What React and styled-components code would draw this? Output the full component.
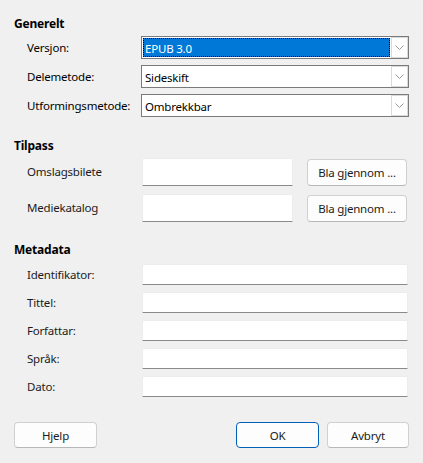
import React from 'react';
import styled, { createGlobalStyle } from 'styled-components';

const GlobalStyle = createGlobalStyle`
html, body {
	margin: 0;
	padding: 0;
	background: #f0f0f0;
}
body {
	font-family: "Noto Sans", "Open Sans", sans-serif;
	font-size: 11.5px;
	letter-spacing: -0.2px;
	color: #000;
}
`;

const Dialog = styled.div`
width: 423px;
height: 463px;
box-sizing: border-box;
padding: 16px 14px 0 14px;
display: flex;
flex-direction: column;
`;

const Section = styled.div`
display: flex;
flex-direction: column;
margin-top: ${(p) => p.top || 0}px;
`;

const Heading = styled.div`
font-weight: bold;
font-size: 12px;
line-height: 16px;
height: 16px;
margin-bottom: ${(p) => p.gap || 4}px;
`;

const Rows = styled.div`
display: flex;
flex-direction: column;
gap: ${(p) => p.gap}px;
padding-left: 13px;
`;

const Row = styled.div`
display: grid;
grid-template-columns: ${(p) => p.cols};
align-items: center;
height: ${(p) => p.h}px;
`;

const Label = styled.div`
line-height: 16px;
white-space: nowrap;
color: ${(p) => p.color || '#000'};
`;

const Combo = styled.div`
height: 23px;
box-sizing: border-box;
border: 1px solid #7a7a7a;
background: #fff;
display: flex;
`;

const ComboText = styled.div`
flex: 1;
margin: 1px;
padding-left: 1px;
line-height: 19px;
box-sizing: border-box;
border: 1px dotted ${(p) => (p.focused ? '#000' : 'transparent')};
background: ${(p) => (p.focused ? '#0078d7' : '#fff')};
color: ${(p) => (p.focused ? '#fff' : '#000')};
`;

const ComboButton = styled.div`
width: 17px;
box-sizing: border-box;
border: 1px solid #dadada;
display: flex;
align-items: center;
justify-content: center;
`;

const TextField = styled.div`
height: ${(p) => p.h}px;
box-sizing: border-box;
background: #fff;
border: 1px solid #ececec;
border-bottom: 1px solid #8a8a8a;
border-radius: 2px 2px 0 0;
`;

const Button = styled.button`
font-family: inherit;
font-size: 11.5px;
letter-spacing: -0.2px;
color: #1b1b1b;
background: #fdfdfd;
height: ${(p) => p.h || 26}px;
width: ${(p) => p.w}px;
box-sizing: border-box;
border: 1px solid ${(p) => (p.primary ? '#005fb8' : '#d0d0d0')};
border-bottom-color: ${(p) => (p.primary ? '#005fb8' : '#b8b8b8')};
border-radius: 4px;
padding: 0;
margin: 0 0 0 ${(p) => p.ml || 0}px;
`;

const Footer = styled.div`
margin-top: 25px;
display: flex;
align-items: center;
`;

const Spacer = styled.div`
flex: 1;
`;

const Chevron = () => (
	<svg width="9" height="5" viewBox="0 0 9 5">
		<path d="M0.5 0.5 L4.5 4.5 L8.5 0.5" fill="none" stroke="#9a9a9a" strokeWidth="1" />
	</svg>
);

const combos = [
	{ label: 'Versjon:', value: 'EPUB 3.0', focused: true },
	{ label: 'Delemetode:', value: 'Sideskift' },
	{ label: 'Utformingsmetode:', value: 'Ombrekkbar' },
];

const custom = ['Omslagsbilete', 'Mediekatalog'];

const meta = ['Identifikator:', 'Tittel:', 'Forfattar:', 'Språk:', 'Dato:'];

const App = () => {
	return (
		<>
			<GlobalStyle />
			<Dialog>
				<Section>
					<Heading>Generelt</Heading>
					<Rows gap={6}>
						{combos.map((c) => (
							<Row key={c.label} cols="114px 268px" h={23}>
								<Label>{c.label}</Label>
								<Combo>
									<ComboText focused={c.focused}>{c.value}</ComboText>
									<ComboButton>
										<Chevron />
									</ComboButton>
								</Combo>
							</Row>
						))}
					</Rows>
				</Section>

				<Section top={21}>
					<Heading>Tilpass</Heading>
					<Rows gap={8}>
						{custom.map((c) => (
							<Row key={c} cols="115px 151px 14px 100px" h={28}>
								<Label color="#1b1b1b">{c}</Label>
								<TextField h={28} />
								<span />
								<Button w={100} h={27}>Bla gjennom ...</Button>
							</Row>
						))}
					</Rows>
				</Section>

				<Section top={20}>
					<Heading gap={6}>Metadata</Heading>
					<Rows gap={7}>
						{meta.map((m) => (
							<Row key={m} cols="115px 266px" h={21}>
								<Label color="#1b1b1b">{m}</Label>
								<TextField h={21} />
							</Row>
						))}
					</Rows>
				</Section>

				<Footer>
					<Button w={83}>Hjelp</Button>
					<Spacer />
					<Button w={83} primary>OK</Button>
					<Button w={82} ml={8}>Avbryt</Button>
				</Footer>
			</Dialog>
		</>
	);
};

export default App;
